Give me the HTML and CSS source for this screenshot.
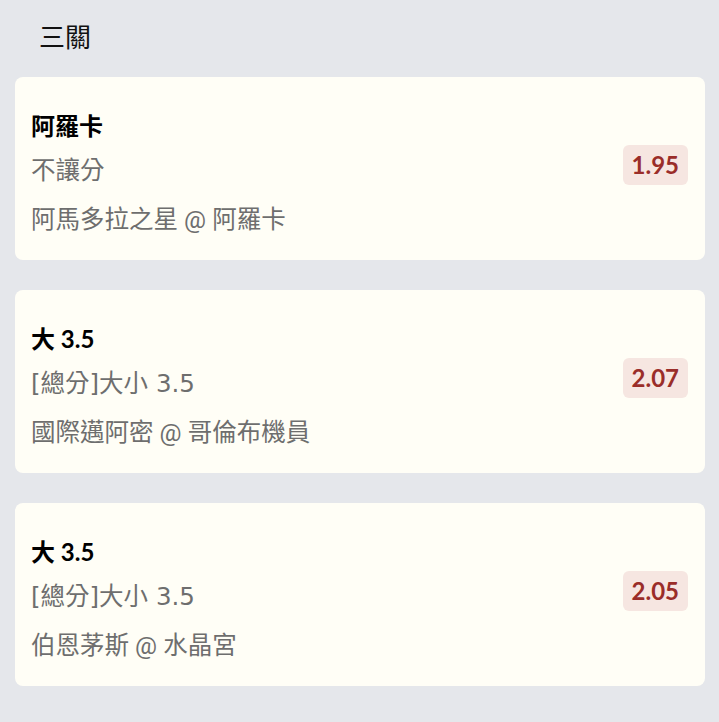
FILE: index.html
```html
<!DOCTYPE html>
<html lang="zh-Hant">
<head>
<meta charset="UTF-8" />
<meta name="viewport" content="width=device-width, initial-scale=1" />
<title>三關</title>
<link rel="stylesheet" href="styles.css">
</head>
<body>

  <h1 class="page-title">三關</h1>

  <div class="bet-list">
    <div class="bet-card">
      <div class="bet-info">
        <div class="bet-pick">阿羅卡</div>
        <div class="bet-market">不讓分</div>
        <div class="bet-match">阿馬多拉之星 @ 阿羅卡</div>
      </div>
      <span class="bet-odds">1.95</span>
    </div>

    <div class="bet-card">
      <div class="bet-info">
        <div class="bet-pick">大 3.5</div>
        <div class="bet-market">[總分]大小 3.5</div>
        <div class="bet-match">國際邁阿密 @ 哥倫布機員</div>
      </div>
      <span class="bet-odds">2.07</span>
    </div>

    <div class="bet-card">
      <div class="bet-info">
        <div class="bet-pick">大 3.5</div>
        <div class="bet-market">[總分]大小 3.5</div>
        <div class="bet-match">伯恩茅斯 @ 水晶宮</div>
      </div>
      <span class="bet-odds">2.05</span>
    </div>
  </div>

</body>
</html>
```

FILE: styles.css
```css
body {
  margin: 0;
  padding: 0 14px 0 15px;
  background: #e5e7eb;
  font-family: Lato, "Noto Sans CJK TC", sans-serif;
  color: #111;
}
.page-title {
  margin: 0;
  padding: 19px 0 0 24px;
  height: 77px;
  box-sizing: border-box;
  font-family: "Noto Sans CJK TC", sans-serif;
  font-size: 26px;
  font-weight: 400;
  line-height: 34px;
}
.bet-list {
  display: flex;
  flex-direction: column;
  gap: 30px;
}
.bet-card {
  display: flex;
  align-items: center;
  justify-content: space-between;
  height: 183px;
  box-sizing: border-box;
  padding: 0 17px 0 16px;
  background: #fffef6;
  border-radius: 8px;
}
.bet-info {
  align-self: flex-start;
  padding-top: 34px;
}
.bet-pick {
  font-size: 24px;
  font-weight: 700;
  line-height: 30px;
  color: #000;
}
.bet-market,
.bet-match {
  font-size: 24.5px;
  color: #6e6e6e;
}
.bet-market {
  margin-top: 14px;
  font-family: "DejaVu Sans", "Noto Sans CJK TC", sans-serif;
  line-height: 32px;
}
.bet-match {
  margin-top: 18px;
  font-family: Roboto, "Noto Sans CJK TC", sans-serif;
  line-height: 30px;
}
.bet-odds {
  margin-bottom: 7px;
  padding: 0 9px;
  height: 40px;
  line-height: 40px;
  border-radius: 6px;
  background: #f6e6e1;
  color: #9a2d29;
  font-size: 24px;
  font-weight: 700;
}
```
